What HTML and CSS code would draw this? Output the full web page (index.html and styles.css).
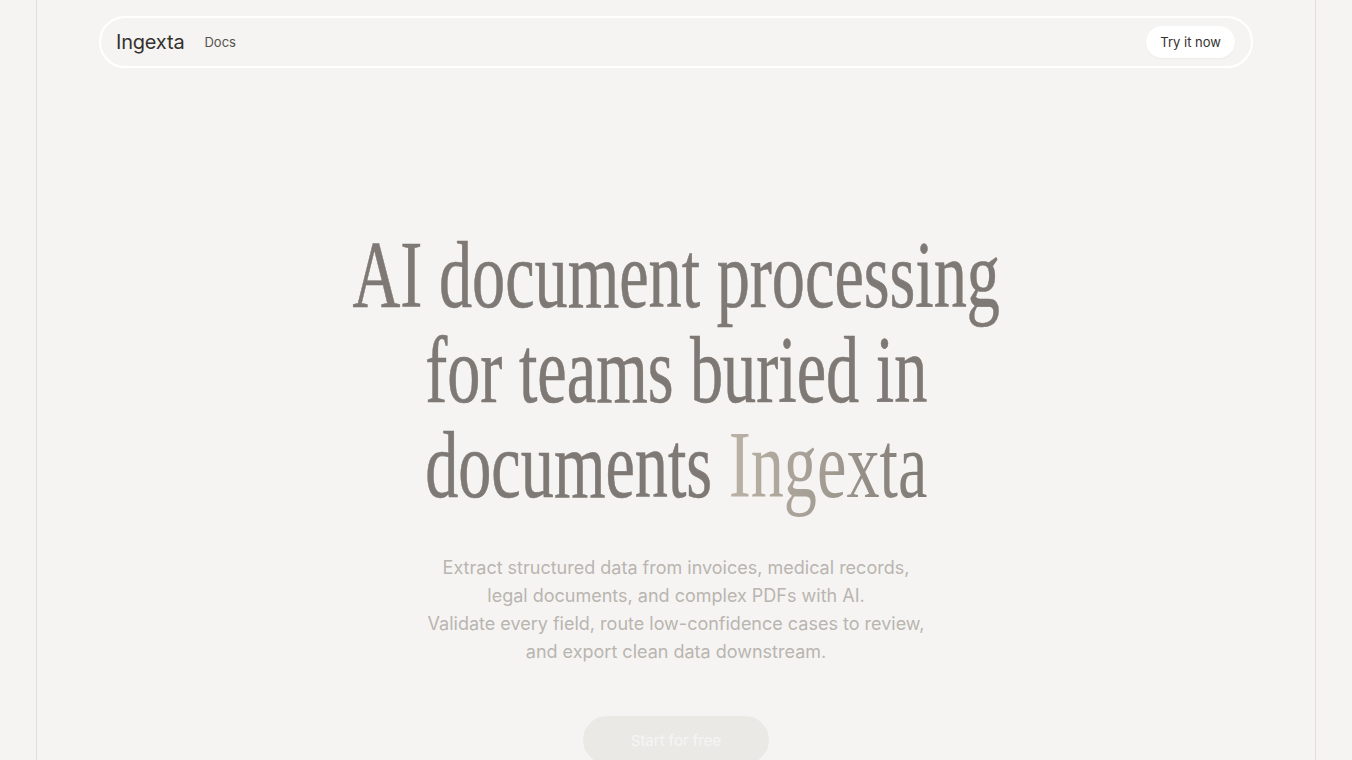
FILE: index.html
```html
<!DOCTYPE html>
<html lang="en">
<head>
<meta charset="utf-8">
<title>Ingexta</title>
<link rel="stylesheet" href="styles.css">
</head>
<body>
<div class="frame">
  <header class="nav">
    <div class="nav-left">
      <span class="logo">Ingexta</span>
      <a class="nav-link" href="#">Docs</a>
    </div>
    <a class="nav-btn" href="#">Try it now</a>
  </header>
  <main class="hero">
    <h1 class="title"><span class="title-inner">AI document processing<br>for teams buried in<br>documents <span class="brand">Ingexta</span></span></h1>
    <p class="lead">Extract structured data from invoices, medical records,<br>legal documents, and complex PDFs with AI.<br>Validate every field, route low-confidence cases to review,<br>and export clean data downstream.</p>
    <a class="cta" href="#">Start for free</a>
  </main>
</div>
</body>
</html>
```
FILE: styles.css
```css
html, body {
  margin: 0;
  padding: 0;
  background: #f5f4f2;
  overflow: hidden;
}
body {
  font-family: "Inter", "Noto Sans", sans-serif;
  color: #3a3734;
}
a { text-decoration: none; color: inherit; }
.frame {
  width: 1278px;
  margin: 0 auto;
  min-height: 100vh;
  border-left: 1px solid #e2dfdb;
  border-right: 1px solid #e2dfdb;
  padding-top: 16px;
  box-sizing: content-box;
}
.nav {
  width: 1119px;
  height: 48px;
  margin: 0 auto;
  border: 2px solid #ffffff;
  border-radius: 999px;
  display: flex;
  align-items: center;
  justify-content: space-between;
  padding: 0 16px 0 15px;
  box-sizing: content-box;
}
.nav-left {
  display: flex;
  align-items: center;
  gap: 20px;
}
.logo {
  font-size: 20px;
  color: #34312e;
  letter-spacing: -0.2px;
}
.nav-link {
  font-size: 13px;
  color: #55514d;
}
.nav-btn {
  background: #ffffff;
  border-radius: 999px;
  height: 32px;
  padding: 0 14px;
  display: flex;
  align-items: center;
  font-size: 13px;
  color: #34312e;
  box-shadow: 0 1px 2px rgba(0,0,0,0.04);
}
.hero {
  display: flex;
  flex-direction: column;
  align-items: center;
  padding-top: 159px;
}
.title {
  margin: 0;
  font-family: "Liberation Serif", "Times New Roman", serif;
  font-weight: 400;
  font-size: 96px;
  line-height: 95px;
  color: #7e7975;
  text-align: center;
}
.title-inner {
  display: inline-block;
  transform: scaleX(0.69);
  transform-origin: center top;
  -webkit-text-stroke: 0.6px #7e7975;
}
.brand {
  background: linear-gradient(90deg, #bab2a6 0%, #a29b92 50%, #7d7873 100%);
  -webkit-background-clip: text;
  background-clip: text;
  color: transparent;
  -webkit-text-stroke: 0;
}
.lead {
  margin: 42px 0 0;
  font-size: 18px;
  line-height: 28px;
  color: #b9b5b0;
  text-align: center;
}
.cta {
  margin-top: 50px;
  width: 186px;
  height: 48px;
  border-radius: 999px;
  background: #ebe9e6;
  color: #f6f5f3;
  display: flex;
  align-items: center;
  justify-content: center;
  font-size: 15px;
}
```
